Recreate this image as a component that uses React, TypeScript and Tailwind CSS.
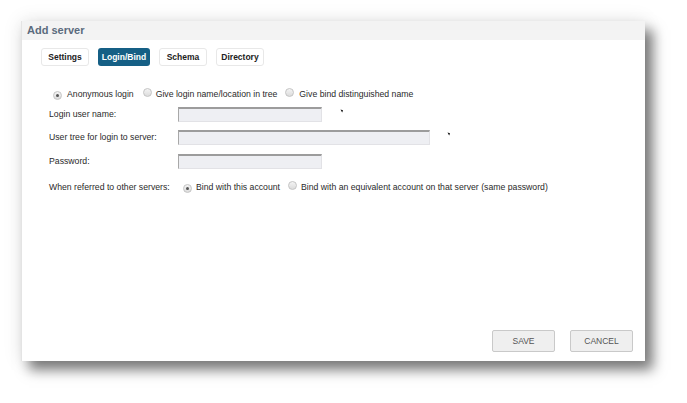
import React from "react";

const Radio = ({ checked }: { checked?: boolean }) => (
  <span className="relative inline-flex w-[9px] h-[9px] shrink-0 items-center justify-center rounded-full border border-[#c4c4c4] bg-gradient-to-b from-[#f4f4f4] to-[#dcdcdc]">
    {checked && <span className="w-[3px] h-[3px] rounded-full bg-[#555]" />}
  </span>
);

const Tick = () => (
  <svg width="4" height="4" viewBox="0 0 4 4" className="shrink-0">
    <path d="M0.5 0.5 L3 1.2 L2.2 3.5 Z" fill="#111" />
  </svg>
);

const Input = ({ w }: { w: string }) => (
  <div
    className={`${w} h-[15px] bg-[#eeeff3] border border-[#e2e2e6] border-t-2 border-t-[#9c9c9c] border-l-[#a8a8a8]`}
  />
);

export default function App() {
  const tabs = ["Settings", "Login/Bind", "Schema", "Directory"];
  return (
    <div className="w-[687px] h-[403px] bg-white pt-[21px] pl-[21px] overflow-hidden" style={{ fontFamily: '"Liberation Sans", Arial, sans-serif' }}>
      <div className="w-[624px] h-[340px] bg-white flex flex-col border-l border-[#e4e4e4] shadow-[8px_9px_12px_rgba(0,0,0,0.5),0_0_18px_rgba(0,0,0,0.1)]">
        <div className="h-[19px] bg-[#f3f3f3] flex items-center pl-[5px]">
          <span className="text-[11px] font-bold text-[#5b6b7d] leading-none">Add server</span>
        </div>
        <div className="flex gap-[9px] pl-[19px] mt-[8px]">
          {tabs.map((t) =>
            t === "Login/Bind" ? (
              <div key={t} className="w-[52px] h-[18px] rounded-[3px] bg-[#155f85] flex items-center justify-center text-[8.5px] font-bold text-white">
                {t}
              </div>
            ) : (
              <div key={t} className="w-[48px] h-[18px] rounded-[3px] bg-white border border-[#e8e8e8] flex items-center justify-center text-[8.5px] font-bold text-[#222]">
                {t}
              </div>
            )
          )}
        </div>
        <div className="flex items-center h-[14px] mt-[22px] pl-[31px] text-[8.7px] text-[#2a2a2a]">
          <Radio checked />
          <span className="ml-[5px]">Anonymous login</span>
          <span className="ml-[9px]"><Radio /></span>
          <span className="ml-[4px]">Give login name/location in tree</span>
          <span className="ml-[8px]"><Radio /></span>
          <span className="ml-[5px]">Give bind distinguished name</span>
        </div>
        <div className="flex items-center h-[15px] mt-[5px] pl-[27px] text-[8.7px] text-[#2a2a2a]">
          <span className="w-[129px]">Login user name:</span>
          <Input w="w-[144px]" />
          <span className="ml-[18px] -mt-[8px]"><Tick /></span>
        </div>
        <div className="flex items-center h-[15px] mt-[8px] pl-[27px] text-[8.7px] text-[#2a2a2a]">
          <span className="w-[129px]">User tree for login to server:</span>
          <Input w="w-[252px]" />
          <span className="ml-[17px] -mt-[8px]"><Tick /></span>
        </div>
        <div className="flex items-center h-[15px] mt-[9px] pl-[27px] text-[8.7px] text-[#2a2a2a]">
          <span className="w-[129px]">Password:</span>
          <Input w="w-[144px]" />
        </div>
        <div className="flex items-center h-[14px] mt-[12px] pl-[27px] text-[8.7px] text-[#2a2a2a]">
          <span className="w-[134px]">When referred to other servers:</span>
          <Radio checked />
          <span className="ml-[4px]">Bind with this account</span>
          <span className="ml-[8px]"><Radio /></span>
          <span className="ml-[4px]">Bind with an equivalent account on that server (same password)</span>
        </div>
        <div className="flex-1" />
        <div className="flex justify-end gap-[15px] pr-[12px] mb-[9px]">
          <button className="w-[63px] h-[22px] rounded-[2px] bg-[#efefef] border border-[#c9c9c9] text-[8.5px] text-[#555]">SAVE</button>
          <button className="w-[63px] h-[22px] rounded-[2px] bg-[#efefef] border border-[#c9c9c9] text-[8.5px] text-[#555]">CANCEL</button>
        </div>
      </div>
    </div>
  );
}
